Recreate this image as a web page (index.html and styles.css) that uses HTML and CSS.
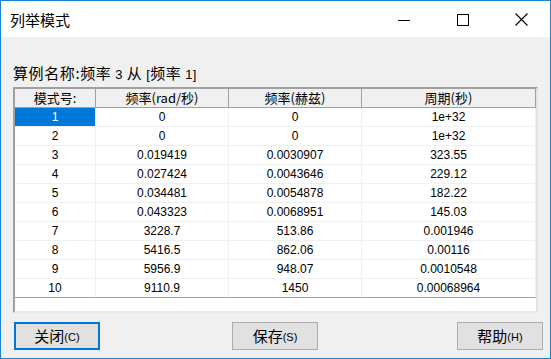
FILE: index.html
```html
<!DOCTYPE html>
<html lang="zh-CN">
<head>
<meta charset="utf-8">
<title>列举模式</title>
<link rel="stylesheet" href="styles.css">
</head>
<body>
<div class="window">
  <div class="titlebar">
    <span class="title">列举模式</span>
    <div class="controls">
      <span class="ctl"><svg width="12" height="12" viewBox="0 0 12 12"><line x1="0" y1="6.5" x2="12" y2="6.5" stroke="#000" stroke-width="1"/></svg></span>
      <span class="ctl"><svg width="12" height="12" viewBox="0 0 12 12"><rect x="0.5" y="0.5" width="11" height="11" fill="none" stroke="#000" stroke-width="1"/></svg></span>
      <span class="ctl"><svg width="13" height="13" viewBox="0 0 13 13"><path d="M0.5 0.5 L12.5 12.5 M12.5 0.5 L0.5 12.5" stroke="#000" stroke-width="1.1" fill="none"/></svg></span>
    </div>
  </div>
  <div class="content">
    <div class="label">算例名称:频率<span class="lat"> 3 </span>从<span class="lat"> [</span>频率<span class="lat"> 1]</span></div>
    <div class="listbox">
      <div class="grid">
        <div class="hd">模式号:</div>
        <div class="hd">频率(rad/秒)</div>
        <div class="hd">频率(赫兹)</div>
        <div class="hd">周期(秒)</div>

        <div class="cell sel">1</div><div class="cell">0</div><div class="cell">0</div><div class="cell">1e+32</div>
        <div class="cell">2</div><div class="cell">0</div><div class="cell">0</div><div class="cell">1e+32</div>
        <div class="cell">3</div><div class="cell">0.019419</div><div class="cell">0.0030907</div><div class="cell">323.55</div>
        <div class="cell">4</div><div class="cell">0.027424</div><div class="cell">0.0043646</div><div class="cell">229.12</div>
        <div class="cell">5</div><div class="cell">0.034481</div><div class="cell">0.0054878</div><div class="cell">182.22</div>
        <div class="cell">6</div><div class="cell">0.043323</div><div class="cell">0.0068951</div><div class="cell">145.03</div>
        <div class="cell">7</div><div class="cell">3228.7</div><div class="cell">513.86</div><div class="cell">0.001946</div>
        <div class="cell">8</div><div class="cell">5416.5</div><div class="cell">862.06</div><div class="cell">0.00116</div>
        <div class="cell">9</div><div class="cell">5956.9</div><div class="cell">948.07</div><div class="cell">0.0010548</div>
        <div class="cell last">10</div><div class="cell last">9110.9</div><div class="cell last">1450</div><div class="cell last">0.00068964</div>
      </div>
      <div class="filler"></div>
    </div>
    <div class="buttons">
      <button class="btn focus">关闭<span class="key">(C)</span></button>
      <button class="btn mid">保存<span class="key">(S)</span></button>
      <button class="btn right">帮助<span class="key">(H)</span></button>
    </div>
  </div>
</div>
</body>
</html>
```
FILE: styles.css
```css
* { box-sizing: border-box; }
html, body { margin: 0; padding: 0; background: #f0f0f0; }
body {
  font-family: "Noto Sans CJK SC", "Liberation Sans", sans-serif;
  color: #000;
}
.window {
  width: 551px;
  height: 359px;
  border: 1px solid #1883d7;
  background: #f0f0f0;
  display: flex;
  flex-direction: column;
  overflow: hidden;
}
.titlebar {
  height: 36px;
  background: #fff;
  display: flex;
  align-items: center;
  flex: none;
}
.title {
  padding-left: 9px;
  font-size: 15px;
  line-height: 20px;
  margin-top: 1px;
  flex: 1;
}
.controls { display: flex; height: 36px; }
.ctl {
  width: 59px;
  display: flex;
  align-items: center;
  justify-content: center;
  padding-top: 1px;
}
.ctl:last-child { width: 58px; }
.content {
  flex: 1;
  display: flex;
  flex-direction: column;
  padding: 0 0 0 12px;
}
.label {
  margin-top: 26px;
  height: 20px;
  line-height: 20px;
  font-size: 15px;
  letter-spacing: 0.6px;
  white-space: pre;
}
.lat {
  font-family: "Liberation Sans", sans-serif;
  font-size: 13px;
  letter-spacing: 0.3px;
}
.listbox {
  margin-top: 4px;
  width: 525px;
  height: 226px;
  border-top: 2px solid #a0a0a0;
  border-left: 2px solid #a0a0a0;
  border-right: 2px solid #e3e3e3;
  border-bottom: 2px solid #e8e8e8;
  background: #fff;
  display: flex;
  flex-direction: column;
}
.grid {
  display: grid;
  grid-template-columns: 81px 133px 133px 174px;
  grid-auto-rows: 19px;
}
.hd {
  background: #f0f0f0;
  border-right: 1px solid #a0a0a0;
  border-bottom: 1px solid #a0a0a0;
  text-align: center;
  font-size: 13px;
  line-height: 18px;
  white-space: nowrap;
}
.cell {
  border-right: 1px solid #f0f0f0;
  border-bottom: 1px solid #f0f0f0;
  text-align: center;
  font-family: "Liberation Sans", sans-serif;
  font-size: 12px;
  line-height: 18px;
}
.cell.sel {
  background: #0078d7;
  color: #fff;
}
.cell.last { border-bottom-color: #a0a0a0; }
.filler { flex: 1; }
.buttons {
  display: flex;
  margin-top: 9px;
  padding-left: 1px;
  padding-right: 7px;
}
.btn {
  width: 86px;
  height: 28px;
  background: #e1e1e1;
  border: 1px solid #adadad;
  font-family: "Noto Sans CJK SC", sans-serif;
  font-size: 15px;
  color: #000;
  padding: 0;
  display: flex;
  align-items: center;
  justify-content: center;
  line-height: 20px;
}
.btn.focus { border: 2px solid #0078d7; }
.btn.mid { margin-left: 132px; }
.btn.right { margin-left: auto; }
.key {
  font-family: "Liberation Sans", sans-serif;
  font-size: 11px;
  margin-top: 2px;
}
```
